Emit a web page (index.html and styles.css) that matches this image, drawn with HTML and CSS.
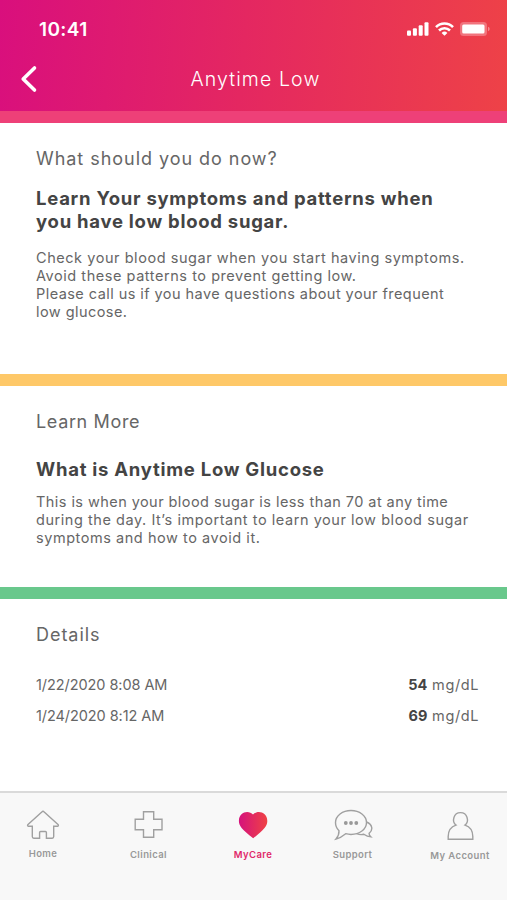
FILE: index.html
```html
<!DOCTYPE html>
<html lang="en">
<head>
    <meta charset="UTF-8">
    <meta name="viewport" content="width=device-width, initial-scale=1.0">
    <title>Anytime Low</title>
    <link rel="stylesheet" href="styles.css">
</head>
<body>

    <header class="header">
        <div class="status-bar">
            <span class="time">10:41</span>
            <div class="status-icons">
                <svg class="signal" width="22" height="14" viewBox="0 0 22 14" fill="#fff">
                    <rect x="0" y="8.5" width="4" height="5.2" rx="1"/>
                    <rect x="5.9" y="6.3" width="4" height="7.4" rx="1"/>
                    <rect x="11.7" y="3.3" width="4" height="10.4" rx="1"/>
                    <rect x="17.5" y="0.3" width="4" height="13.4" rx="1"/>
                </svg>
                <svg class="wifi" width="19" height="14" viewBox="0 0 19 14" fill="none" stroke="#fff" stroke-width="2.6">
                    <path d="M1 5.1a12 12 0 0 1 17 0"/>
                    <path d="M4 8.5a7.8 7.8 0 0 1 11 0"/>
                    <path d="M9.5 13.8 6.6 10.9a4.1 4.1 0 0 1 5.8 0z" fill="#fff" stroke="none"/>
                </svg>
                <svg class="battery" width="30" height="14" viewBox="0 0 30 14">
                    <rect x="0" y="0" width="27" height="14" rx="3.5" fill="#fff" fill-opacity="0.28"/>
                    <rect x="2.2" y="2.5" width="22.3" height="9" rx="1.5" fill="#fff"/>
                    <path d="M28 4.8v4.4q1.7-.6 1.7-2.2T28 4.8z" fill="#fff" fill-opacity="0.4"/>
                </svg>
            </div>
        </div>
        <div class="title-bar">
            <svg class="back" width="18" height="28" viewBox="0 0 18 28" fill="none" stroke="#fff" stroke-width="3.6" stroke-linecap="round" stroke-linejoin="round">
                <path d="M14.5 3 3.2 14l11.3 11"/>
            </svg>
            <h1>Anytime Low</h1>
        </div>
    </header>

    <section class="card advice">
        <h2>What should you do now?</h2>
        <h3>Learn Your symptoms and patterns when<br>you have low blood sugar.</h3>
        <p>
            <span class="line">Check your blood sugar when you start having symptoms.</span>
            <span class="line">Avoid these patterns to prevent getting low.</span>
            <span class="line tight">Please call us if you have questions about your frequent</span>
            <span class="line tight">low glucose.</span>
        </p>
    </section>

    <section class="card learn">
        <h2>Learn More</h2>
        <h3>What is Anytime Low Glucose</h3>
        <p>
            <span class="line tight">This is when your blood sugar is less than 70 at any time</span>
            <span class="line">during the day. It’s important to learn your low blood sugar</span>
            <span class="line">symptoms and how to avoid it.</span>
        </p>
    </section>

    <section class="card details">
        <h2>Details</h2>
        <div class="reading">
            <span class="date">1/22/2020 8:08 AM</span>
            <span class="value"><b>54</b> mg/dL</span>
        </div>
        <div class="reading">
            <span class="date">1/24/2020 8:12 AM</span>
            <span class="value"><b>69</b> mg/dL</span>
        </div>
    </section>

    <nav class="tabs">
        <a class="tab home">
            <svg width="34" height="32" viewBox="0 0 34 32">
                <path d="M17 2.3q-.6 0-1.2.6L2 15.4q-1 1.1.3 1.9h4v10.2q0 1.7 1.5 1.7h5.8v-5.7q0-1 1-1h4.8q1 0 1 1v5.7h5.8q1.5 0 1.5-1.7V17.3h4q1.3-.8.3-1.9L18.2 2.9q-.6-.6-1.2-.6z"/>
            </svg>
            <span>Home</span>
        </a>
        <a class="tab clinical">
            <svg width="34" height="32" viewBox="0.5 0 34 32">
                <path d="M12 2.7h10.2v7.5h8.3v10.6h-8.3v7.5H12v-7.5H3.7V10.2H12z"/>
            </svg>
            <span>Clinical</span>
        </a>
        <a class="tab mycare">
            <svg width="34" height="32" viewBox="0 0 34 32">
                <defs>
                    <linearGradient id="heart">
                        <stop offset="0" stop-color="#d5127c"/>
                        <stop offset="1" stop-color="#ef4245"/>
                    </linearGradient>
                </defs>
                <path d="M17 5.5C13 .8 2.9 2.5 2.9 12c0 5 3.1 8.3 14.3 17.3C28.2 20.3 31.3 17 31.3 12 31.3 2.5 21 .8 17 5.5z"/>
            </svg>
            <span>MyCare</span>
        </a>
        <a class="tab support">
            <svg width="40" height="32" viewBox="0 1 40 32">
                <path d="M18 2.5c8.500 0 15.500 5.200 15.500 12S26.500 26.500 18 26.500c-2 0-3.700-.3-5.300-.8-2.600 2.200-5.700 4.300-9.700 5.300 2-2.300 3.200-4.700 3-8.200-2.200-2.200-3.500-5-3.500-8.300 0-6.800 7-12 15.500-12z"/>
                <path d="M33.500 14c6.300 2.500 6.700 8.300 2.600 11.400 0 1.200.6 2.300 1.900 3.500-2.800-.1-5-1-7.200-2.600-2.700.6-5 .3-6.900-.7"/>
                <g class="dots">
                    <circle cx="12.800" cy="15" r="1.900"/>
                    <circle cx="18" cy="15" r="1.900"/>
                    <circle cx="23.300" cy="15" r="1.900"/>
                </g>
            </svg>
            <span>Support</span>
        </a>
        <a class="tab account">
            <svg width="34" height="32" viewBox="-0.5 -1.5 34 32">
                <path d="M12.500 14.600C8 11 10 2.100 17 2.100s9 8.900 4.500 12.500c5.500 1.800 7.800 6 7.800 11.400v2.700H4.700V26c0-5.400 2.300-9.600 7.800-11.400z"/>
            </svg>
            <span>My Account</span>
        </a>
    </nav>

</body>
</html>
```
FILE: styles.css
```css
* {
    box-sizing: border-box;
}

body {
    margin: 0;
    width: 507px;
    height: 900px;
    overflow: hidden;
    display: flex;
    flex-direction: column;
    font-family: Inter, "Noto Sans", sans-serif;
    color: #666;
    background: #fff;
}

h1, h2, h3, p {
    margin: 0;
}

.header {
    height: 111px;
    background: linear-gradient(95deg, #d90f7d 0%, #e42761 48%, #ee4247 100%);
    color: #fff;
}

.status-bar {
    height: 58px;
    padding: 0 17px 0 39px;
    display: flex;
    align-items: center;
    justify-content: space-between;
}

.time {
    font-size: 19px;
    font-weight: 600;
    letter-spacing: 0.4px;
}

.status-icons {
    display: flex;
    gap: 6px;
}

.title-bar {
    height: 41px;
    padding: 0 20px;
    display: flex;
    align-items: center;
}

h1 {
    flex: 1;
    padding-right: 14px;
    text-align: center;
    font-size: 19.5px;
    font-weight: 300;
    letter-spacing: 1.1px;
}

.card {
    padding: 0 28px 0 36px;
    border-top: 12px solid;
}

.card h2 {
    font-size: 18px;
    line-height: 24px;
    font-weight: 400;
    letter-spacing: 0.96px;
    color: #666;
}

.card h3 {
    font-size: 18.5px;
    line-height: 23.5px;
    font-weight: 700;
    letter-spacing: 0.74px;
    color: #444;
}

.card p {
    font-size: 14.5px;
    line-height: 18.3px;
    letter-spacing: 0.55px;
    color: #666;
}

.line {
    display: block;
    white-space: nowrap;
}

.tight {
    letter-spacing: 0.44px;
}

.advice {
    height: 263px;
    border-color: #ee4078;
}

.learn {
    height: 213px;
    border-color: #fec868;
}

.details {
    height: 204px;
    border-color: #69c88c;
}

.advice h2 {
    margin: 24px 0 15.5px;
}

.advice h3 {
    margin-bottom: 15px;
}

.learn h2 {
    margin: 23.5px 0 24.5px;
    letter-spacing: 0.65px;
}

.learn h3 {
    margin-bottom: 11px;
}

.details h2 {
    margin: 24px 0 22px;
}

.reading {
    height: 31px;
    display: flex;
    align-items: center;
    justify-content: space-between;
    font-size: 14.5px;
    color: #666;
}

.date {
    letter-spacing: -0.07px;
}

.value {
    letter-spacing: 0.6px;
}

.reading b {
    color: #444;
    letter-spacing: 0;
}

.tabs {
    height: 109px;
    padding-top: 16px;
    display: flex;
    background: #f8f8f8;
    border-top: 2px solid #dadada;
}

.tab {
    display: flex;
    flex-direction: column;
    align-items: center;
    gap: 8px;
    font-size: 9.5px;
    line-height: 12px;
    font-weight: 600;
    letter-spacing: 0.4px;
    color: #999;
}

.tab svg {
    fill: none;
    stroke: #a0a0a0;
    stroke-width: 1.4;
}

.tab .dots {
    fill: #999;
    stroke: none;
}

.home {
    width: 86px;
    gap: 7px;
}

.clinical {
    width: 125px;
}

.mycare {
    width: 84px;
    color: #e0286a;
}

.support {
    width: 115px;
}

.account {
    width: 97px;
    padding-left: 3px;
    gap: 9px;
}

.mycare svg {
    fill: url(#heart);
    stroke: none;
}
```
